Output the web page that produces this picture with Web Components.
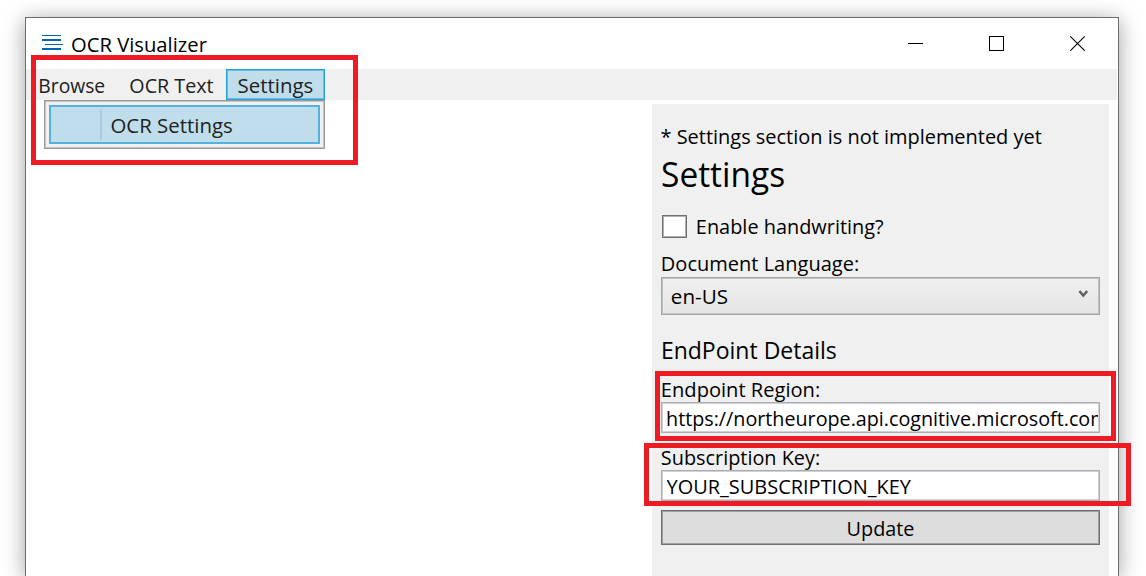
<!DOCTYPE html>
<html lang="en">
<head>
<meta charset="utf-8">
<title>OCR Visualizer</title>
<style>
html,body{margin:0;width:1146px;height:576px;overflow:hidden;background:#fff}
body{position:relative;font-family:"Open Sans","Noto Sans",sans-serif;font-size:20.5px;color:#000}
</style>
</head>
<body>
<app-window>
  <title-bar slot="title"><fit-text dx="1" ink="135.5">OCR Visualizer</fit-text></title-bar>
  <menu-bar slot="menu">
    <menu-item style="width:91px;--pad:13px"><fit-text dx="1.2" ink="64.5">Browse</fit-text></menu-item>
    <menu-item style="width:109px;--pad:13px"><fit-text dx=".3" ink="83">OCR Text</fit-text></menu-item>
    <menu-item open style="width:99px;--pad:12px"><fit-text dx=".5" ink="74">Settings</fit-text>
      <drop-menu slot="popup"><fit-text dx=".5" ink="120.5">OCR Settings</fit-text></drop-menu>
    </menu-item>
  </menu-bar>
  <settings-panel></settings-panel>
</app-window>
<mark-box style="left:31px;top:55px;width:327px;height:110px"></mark-box>
<mark-box style="left:655px;top:371px;width:461px;height:70px"></mark-box>
<mark-box style="left:644px;top:443px;width:487px;height:63px"></mark-box>
<script>
const define=(name,html,init)=>customElements.define(name,class extends HTMLElement{
  connectedCallback(){
    if(this.shadowRoot)return;
    this.attachShadow({mode:'open'}).innerHTML=html;
    if(init)init(this);
  }
});

/* A line of text whose inked width is given by the "ink" attribute; "dx" nudges it sideways. */
const pen=document.createElement('canvas').getContext('2d');
define('fit-text',`<style>
:host{display:block;height:28px;line-height:28px;white-space:nowrap}
span{display:inline-block;transform-origin:0 50%}
</style><span><slot></slot></span>`,el=>{
  const cs=getComputedStyle(el),span=el.shadowRoot.querySelector('span');
  pen.font=cs.fontSize+' '+cs.fontFamily;
  const m=pen.measureText(el.textContent.trim());
  const ink=+el.getAttribute('ink'),dx=+(el.getAttribute('dx')||0);
  const k=ink/(m.actualBoundingBoxLeft+m.actualBoundingBoxRight);
  el.style.width=ink+'px';
  span.style.transform=`translateX(${m.actualBoundingBoxLeft*k+dx}px) scaleX(${k})`;
});

define('app-window',`<style>
:host{display:flex;flex-direction:column;box-sizing:border-box;width:1094px;height:559px;margin:17px 0 0 25px;
border:1px solid #6d6d6d;border-bottom:0;background:#fff;box-shadow:0 3px 20px rgba(0,0,0,.38);position:absolute;left:0;top:0}
.body{flex:1;display:flex;justify-content:flex-end;padding:4px 9px 0 0}
</style><slot name="title"></slot><slot name="menu"></slot><div class="body"><slot></slot></div>`);

define('title-bar',`<style>
:host{display:flex;height:51px;align-items:flex-start}
.logo{margin:16px 8px 0 16px;flex:none}
.t{margin-top:12px}
.ctl{margin:17px 32px 0 auto;display:flex;gap:65px}
svg{display:block}
</style>
<svg class="logo" width="21" height="18" shape-rendering="crispEdges" fill="#0063b1"><path d="M0 1h19v1H0zM0 5h19v2H0zM3 10h18v1H3zM0 14h19v2H0z"/></svg>
<div class="t"><slot></slot></div>
<div class="ctl">
<svg width="16" height="16" shape-rendering="crispEdges"><path d="M0 8h15v1H0z"/></svg>
<svg width="16" height="16" shape-rendering="crispEdges"><path d="M.5 1.5h14v14H.5z" fill="none" stroke="#000"/></svg>
<svg width="16" height="16"><path d="M.3 1.3l14.4 14.4M14.7 1.3L.3 15.7" fill="none" stroke="#000" stroke-width="1.1"/></svg>
</div>`);

define('menu-bar',`<style>
:host{display:flex;height:31px;margin-right:1px;background:#f0f0f0;color:#212121}
</style><slot></slot>`);

define('menu-item',`<style>
:host{display:block;box-sizing:border-box;height:31px;position:relative;padding:2px 0 0 var(--pad)}
:host([open]){background:#c0ddeb;box-shadow:inset 0 0 0 1px #26a0da,inset 0 0 0 2px #6dbbe0}
</style><slot></slot><slot name="popup"></slot>`);

define('drop-menu',`<style>
:host{position:absolute;right:0;top:31px;box-sizing:border-box;width:281px;height:49px;padding:4px;
border:1px solid #999;box-shadow:inset 0 0 0 1px #c4c4c4;background:#f0f0f0;z-index:2}
.row{box-sizing:border-box;height:39px;border:2px solid #52b2e0;background:#c0ddeb;display:flex;align-items:flex-start}
.sep{width:2px;height:31px;margin:2px 9px 0 49px;background:#adcbdb}
.t{margin-top:4px}
</style><div class="row"><div class="sep"></div><div class="t"><slot></slot></div></div>`);

define('check-box',`<style>
:host{display:flex;height:28px;margin-top:15px}
i{box-sizing:border-box;width:25px;height:23px;margin:3px 10px 0 1px;border:1px solid #707070;background:#fff;box-shadow:inset 0 0 0 1px #b0b0b0}
</style><i></i><slot></slot>`);

define('combo-box',`<style>
:host{display:flex;justify-content:space-between;box-sizing:border-box;height:38px;border:1px solid #a5a5a5;
box-shadow:inset 0 0 0 1px #c2c2c2;background:linear-gradient(#f0f0f0,#e5e5e5);padding:4px 10px 0 9px}
svg{margin-top:8px}
</style><slot></slot><svg width="11" height="9"><path d="M1.4 1L5.3 5.6 9.2 1" fill="none" stroke="#606060" stroke-width="2.5"/></svg>`);

define('text-field',`<style>
:host{display:block}
.l{height:27px}
.box{box-sizing:border-box;height:31px;border:1px solid #abadb3;box-shadow:inset 0 0 0 1px #d0d1d4;background:#fff;padding:1px 1px 0 5px}
.clip{overflow:hidden;height:28px}
</style><div class="l"><slot name="label"></slot></div><div class="box"><div class="clip"><slot></slot></div></div>`);

define('push-button',`<style>
:host{display:flex;justify-content:center;box-sizing:border-box;height:35px;margin-top:9px;border:1px solid #707070;
box-shadow:inset 0 0 0 1px #a0a0a0;background:#ddd;padding-top:3px}
</style><slot></slot>`);

define('settings-panel',`<style>
:host{display:block;box-sizing:border-box;width:457px;background:#f0f0f0;padding:18px 9px 0}
.in{margin-left:1px}
.h1{font-size:35px;height:46px;line-height:46px;margin-top:1px}
.h2{font-size:24.2px;height:34px;line-height:34px;margin:18px 0 8px 1px}
</style>
<fit-text class="in" dx="-1.5" ink="381">* Settings section is not implemented yet</fit-text>
<fit-text class="in h1" ink="122.5">Settings</fit-text>
<check-box><fit-text dx=".8" ink="186">Enable handwriting?</fit-text></check-box>
<fit-text class="in" dx=".8" style="margin-top:9px" ink="195">Document Language:</fit-text>
<combo-box><fit-text dx=".8" ink="56">en-US</fit-text></combo-box>
<fit-text class="h2" dx=".8" ink="173.5">EndPoint Details</fit-text>
<text-field><fit-text slot="label" class="in" dx=".8" ink="156">Endpoint Region:</fit-text><fit-text ink="440.5">https://northeurope.api.cognitive.microsoft.com</fit-text></text-field>
<text-field style="margin-top:10px"><fit-text slot="label" class="in" dx="-.2" ink="157">Subscription Key:</fit-text><fit-text dx="-.5" ink="245">YOUR_SUBSCRIPTION_KEY</fit-text></text-field>
<push-button><fit-text dx=".5" ink="66.5">Update</fit-text></push-button>`);

define('mark-box',`<style>
:host{display:block;position:absolute;box-sizing:border-box;border:5px solid #ed1c24;z-index:5}
</style>`);
</script>
</body>
</html>
